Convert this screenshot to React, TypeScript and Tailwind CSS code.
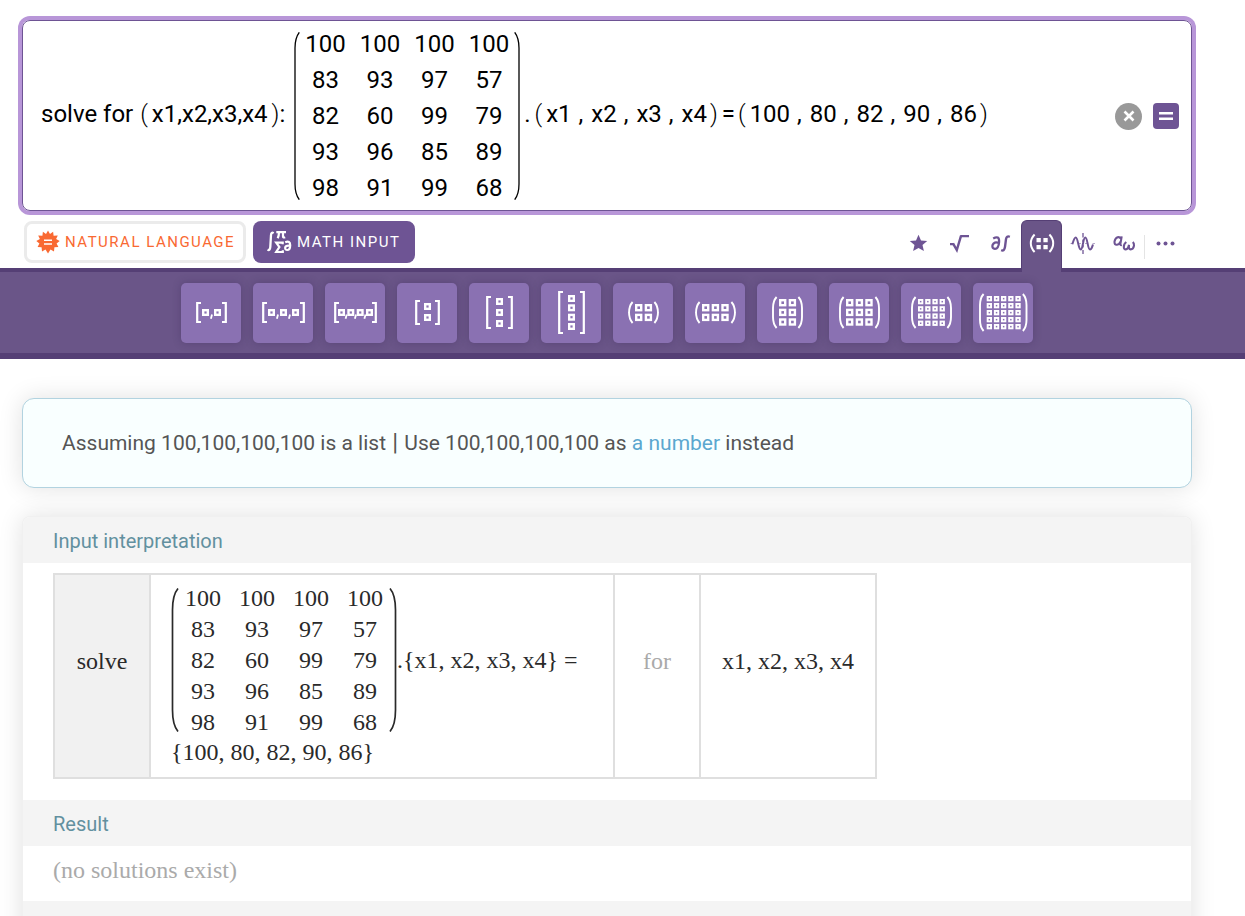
import React, { Fragment } from "react";

const SYSTEM = [
  [100, 100, 100, 100],
  [83, 93, 97, 57],
  [82, 60, 99, 79],
  [93, 96, 85, 89],
  [98, 91, 99, 68],
];

type MatrixIcon = {
  label: string;
  shape: "bracket" | "paren";
  left: number;
  right: number;
  top: number;
  bottom: number;
  size: number;
  xs: number[];
  ys: number[];
  commas?: number[];
};

const MATRIX_ICONS: MatrixIcon[] = [
  { label: "Vector of 2", shape: "bracket", left: 15, right: 46, top: 19, bottom: 40, size: 7, xs: [21, 33], ys: [26], commas: [30.5] },
  { label: "Vector of 3", shape: "bracket", left: 9, right: 52, top: 19, bottom: 40, size: 7, xs: [15, 27, 39], ys: [26], commas: [24.5, 36.5] },
  { label: "Vector of 4", shape: "bracket", left: 9, right: 52, top: 19, bottom: 40, size: 7, xs: [13, 22.3, 31.7, 41], ys: [26], commas: [21.2, 30.5, 40] },
  { label: "Column vector of 2", shape: "bracket", left: 18, right: 43, top: 17, bottom: 42, size: 7, xs: [27], ys: [20, 31] },
  { label: "Column vector of 3", shape: "bracket", left: 17, right: 44, top: 13, bottom: 46, size: 7, xs: [27], ys: [15, 26, 37] },
  { label: "Column vector of 4", shape: "bracket", left: 17, right: 44, top: 8, bottom: 51, size: 7, xs: [27], ys: [12, 21.3, 30.7, 40] },
  { label: "2 by 2 matrix", shape: "paren", left: 15, right: 46, top: 19, bottom: 40, size: 7.4, xs: [22, 31.7], ys: [21, 30.7] },
  { label: "2 by 3 matrix", shape: "paren", left: 10, right: 51, top: 19, bottom: 40, size: 7.4, xs: [17, 26.7, 36.3], ys: [21, 30.7] },
  { label: "3 by 2 matrix", shape: "paren", left: 15, right: 46, top: 14, bottom: 45, size: 7.4, xs: [22, 31.7], ys: [16, 25.7, 35.3] },
  { label: "3 by 3 matrix", shape: "paren", left: 10, right: 51, top: 14, bottom: 45, size: 7.4, xs: [17, 26.7, 36.3], ys: [16, 25.7, 35.3] },
  { label: "4 by 4 matrix", shape: "paren", left: 10, right: 51, top: 14, bottom: 45, size: 5.3, xs: [17, 24.2, 31.4, 38.6], ys: [16, 23.2, 30.4, 37.6] },
  { label: "5 by 5 matrix", shape: "paren", left: 6, right: 54.5, top: 11, bottom: 48, size: 5.3, xs: [13.7, 20.9, 28, 35.2, 42.4], ys: [13, 20, 27, 34, 41] },
];

function MatrixGlyph({ icon }: { icon: MatrixIcon }) {
  const { left: l, right: r, top: t, bottom: b, size, xs, ys } = icon;
  const border = size > 6 ? 2.4 : 1.9;
  const outline =
    icon.shape === "bracket"
      ? `M${l + 5} ${t + 1}H${l + 1.2}V${b - 1}H${l + 5}M${r - 5} ${t + 1}H${r - 1.2}V${b - 1}H${r - 5}`
      : `M${l + 4.6} ${t}Q${l + 1} ${t + 4} ${l + 1} ${t + 11}V${b - 11}Q${l + 1} ${b - 4} ${l + 4.6} ${b}M${r - 4.6} ${t}Q${r - 1} ${t + 4} ${r - 1} ${t + 11}V${b - 11}Q${r - 1} ${b - 4} ${r - 4.6} ${b}`;
  return (
    <svg viewBox="0 0 60 60" className="size-[60px]" fill="none" stroke="white" aria-hidden="true">
      <path d={outline} strokeWidth={icon.shape === "bracket" ? 2.2 : 1.9} />
      {ys.map((y) =>
        xs.map((x) => (
          <rect
            key={`${x}-${y}`}
            x={x + border / 2}
            y={y + border / 2}
            width={size - border}
            height={size - border}
            strokeWidth={border}
          />
        )),
      )}
      {icon.commas?.map((x) => (
        <path key={x} d={`M${x + 0.5} 31.5L${x - 0.6} 35.8`} strokeWidth="1.8" />
      ))}
    </svg>
  );
}

function InputParen({ flip = false }: { flip?: boolean }) {
  return (
    <svg viewBox="0 0 6 168" className="h-[168px] w-[6px]" fill="none" stroke="black" strokeWidth="1.3" aria-hidden="true">
      <path d={flip ? "M.7 .3Q5 6 5 16V152Q5 162 .7 167.7" : "M5.3 .3Q1 6 1 16V152Q1 162 5.3 167.7"} />
    </svg>
  );
}

function SerifParen({ flip = false }: { flip?: boolean }) {
  return (
    <svg viewBox="0 0 8 144" className="h-[144px] w-2" fill="none" stroke="#2a2a2a" strokeWidth="1.7" aria-hidden="true">
      <path d={flip ? "M1 .5Q6.5 7 6.5 22V122Q6.5 137 1 143.5" : "M7 .5Q1.5 7 1.5 22V122Q1.5 137 7 143.5"} />
    </svg>
  );
}

function Tuple({ items }: { items: string[] }) {
  return (
    <>
      <span className="font-light">(</span>
      <span className="pr-[3px] pl-1">
        {items.map((item, i) => (
          <Fragment key={item}>
            {i > 0 && <span className="pr-2 pl-[7px]">,</span>}
            {item}
          </Fragment>
        ))}
      </span>
      <span className="font-light">)</span>
    </>
  );
}

function ModeTabs() {
  return (
    <div className="flex h-[42px] gap-[7px]">
      <button className="flex w-[222px] items-center gap-[5px] rounded-lg border-[3px] border-[#ebebeb] bg-white pl-[9px] text-[15px] tracking-[0.1em] text-[#f96932]">
        <svg viewBox="0 0 24 24" className="size-6 shrink-0" fill="#f96932" aria-hidden="true">
          <path d="M12 0.5L14 4L17.1 1.8L17.6 5.8L21.8 5.5L20.1 9.1L23.7 11L20.6 13.4L22.4 17L18.4 17.3L18 21.4L14.5 19.5L12 23.5L9.5 19.5L6 21.4L5.6 17.3L1.6 17L3.4 13.4L.3 11L3.9 9.1L2.2 5.5L6.4 5.8L6.9 1.8L10 4Z" />
          <path d="M8 10.2H16M8 14H16" stroke="white" strokeWidth="1.6" />
        </svg>
        <span className="whitespace-nowrap">NATURAL LANGUAGE</span>
      </button>
      <button className="flex w-[162px] items-center gap-[5px] rounded-lg bg-[#6e5494] pl-[14px] text-[15px] tracking-[0.1em] text-white">
        <svg viewBox="0 0 25 24" className="h-6 w-[25px] shrink-0" fill="none" stroke="white" aria-hidden="true">
          <path d="M6.6 3.2Q4.3 1.7 4 5L3.3 17Q3 21 .5 19.7" strokeWidth="2.3" />
          <path d="M9.3 2.2H19M12 2.2Q12 5.5 10.7 8.2M16 2.2V6.4Q16 8 18.2 7.3" strokeWidth="2.2" />
          <path d="M15.7 14.2V12.6H9.2L12.4 17L9.2 22H15.8V20.2" strokeWidth="2.2" />
          <path d="M18.2 12.2Q23.2 10.3 23.2 15.2Q23.2 20 20.2 20Q18 20 18.2 17.6Q18.6 15.3 23 15.8" strokeWidth="2.2" />
        </svg>
        <span className="whitespace-nowrap">MATH INPUT</span>
      </button>
    </div>
  );
}

const TOOL_TABS: { label: string; active?: boolean; art: React.ReactNode }[] = [
  {
    label: "Favorites",
    art: <path fill="currentColor" stroke="none" d="M13.5 4.7L16 10.4L22.2 10.9L17.5 15L18.9 21.1L13.5 17.9L8.1 21.1L9.5 15L4.8 10.9L11 10.4Z" />,
  },
  {
    label: "Roots",
    art: (
      <>
        <path strokeWidth="2.1" d="M14.2 6.1H23M4 14.1H7.6" />
        <path strokeWidth="2.4" d="M7 13.4L10.8 20L15 5.8" />
      </>
    ),
  },
  {
    label: "Calculus",
    art: (
      <>
        <path strokeWidth="2.3" d="M6.2 8.4Q12.4 5 12.1 12Q11.6 18.8 8 18.8Q4.9 18.6 5.5 15.2Q7 11 12 13" />
        <path strokeWidth="2.4" d="M22.8 6.8Q19.6 5.4 19 9.2L18 16.8Q17.3 21.6 14.2 20.2" />
      </>
    ),
  },
  {
    label: "Matrices",
    active: true,
    art: (
      <>
        <path strokeWidth="2" d="M6.6 4.5Q2.8 8.5 2.8 13.2Q2.8 18 6.6 22M21.4 4.5Q25.2 8.5 25.2 13.2Q25.2 18 21.4 22" />
        <path fill="currentColor" stroke="none" d="M8.5 8H12.8V12.3H8.5ZM15.4 8H19.7V12.3H15.4ZM8.5 15H12.8V19.3H8.5ZM15.4 15H19.7V19.3H15.4Z" />
      </>
    ),
  },
  {
    label: "Functions",
    art: (
      <>
        <path strokeWidth="2" strokeLinejoin="round" d="M3.3 14.3C4.6 10 5.3 7.5 6.8 7.5C9 7.5 9.3 19.5 11.7 19.5C14 19.5 14 7.5 16.3 7.5C18.6 7.5 18.6 19.5 21 19.5C22.6 19.5 23 17.3 24 14.5" />
        <path strokeWidth="1.3" d="M14 3V7.5M14 9.5V12M14 15V17.5M14 20V24" />
        <path strokeWidth="1" d="M1.5 13.5H4M23.5 13.5H26M9.5 13.5H12M16 13.5H18.5" opacity=".5" />
      </>
    ),
  },
  {
    label: "Greek letters",
    art: (
      <>
        <path strokeWidth="2.1" d="M11.7 6.4L10.4 13.8Q10.2 15.6 11.8 15.1M10.7 8.6Q9.8 6.6 7.6 7.2Q5 8.2 4.5 11.6Q4.3 15 6.8 14.8Q9 14.6 10.5 11.6" />
        <path strokeWidth="2.1" d="M16.3 12Q13.8 13.8 13.8 17Q13.9 19.5 15.8 19.4Q18.2 19.2 19 14.8Q18.4 19.4 20.6 19.4Q23.4 19.2 24 15.6Q24.2 13.4 22.8 12" />
      </>
    ),
  },
];

function ToolTabs() {
  return (
    <nav className="flex items-start text-[#6e5494]" aria-label="Math keyboards">
      {TOOL_TABS.map((tab) => (
        <button
          key={tab.label}
          aria-label={tab.label}
          className={
            tab.active
              ? "relative z-10 flex h-[52px] w-[41px] justify-center rounded-t-md border border-b-0 border-[#553f75] bg-[#6a5588] pt-[9px] text-white"
              : "flex h-12 w-[41px] justify-center pt-[10px]"
          }
        >
          <svg viewBox="0 0 28 28" className="size-7" fill="none" stroke="currentColor" aria-hidden="true">
            {tab.art}
          </svg>
        </button>
      ))}
      <span className="mt-[15px] h-6 w-px bg-[#e4e4e4]" />
      <button aria-label="More" className="flex h-12 w-[41px] justify-center pt-[10px]">
        <svg viewBox="0 0 28 28" className="size-7" fill="currentColor" aria-hidden="true">
          <circle cx="6.5" cy="13.4" r="2" />
          <circle cx="13.5" cy="13.4" r="2" />
          <circle cx="20.5" cy="13.4" r="2" />
        </svg>
      </button>
    </nav>
  );
}

function PodHeading({ children }: { children: React.ReactNode }) {
  return <h2 className="h-[46px] bg-[#f4f4f4] px-[30px] text-xl leading-[48px] text-[#62909f]">{children}</h2>;
}

export default function App() {
  return (
    <div className="flex min-h-screen flex-col bg-white font-['Roboto',sans-serif]">
      <header className="pt-5">
        <div className="mr-[53px] ml-[22px]">
          <form
            onSubmit={(e) => e.preventDefault()}
            className="flex items-center rounded-lg border border-[#6e5494] pt-[5px] pr-3 pb-1 pl-[14px] text-black shadow-[0_0_0_4px_#b896d8]"
          >
            <div
              role="textbox"
              aria-label="Math input"
              tabIndex={0}
              className="flex grow items-center pl-1 text-2xl leading-9 whitespace-nowrap outline-none"
            >
              <span className="pb-1">
                solve for <span className="pl-px font-light">(</span>
                <span className="px-1">x1,x2,x3,x4</span>
                <span className="font-light">)</span>:
              </span>
              <div className="ml-[9px] flex items-center">
                <InputParen />
                <div className="grid grid-cols-4 gap-x-[14px] px-[5px] text-center">
                  {SYSTEM.flat().map((n, i) => (
                    <span key={i}>{n}</span>
                  ))}
                </div>
                <InputParen flip />
              </div>
              <span className="pb-1 pl-1">
                <span className="pr-1">.</span>
                <Tuple items={["x1", "x2", "x3", "x4"]} />
                <span className="pr-[3px] pl-1">=</span>
                <Tuple items={["100", "80", "82", "90", "86"]} />
              </span>
            </div>
            <div className="flex items-center gap-[11px]">
              <button type="button" aria-label="Clear" className="flex size-[27px] items-center justify-center rounded-full bg-[#999]">
                <svg viewBox="0 0 12 12" className="size-3" stroke="white" strokeWidth="2.6" aria-hidden="true">
                  <path d="M1.5 1.5L10.5 10.5M10.5 1.5L1.5 10.5" />
                </svg>
              </button>
              <button type="submit" aria-label="Compute" className="flex size-[26px] items-center justify-center rounded bg-[#6e5494]">
                <svg viewBox="0 0 14 10" className="h-[10px] w-[14px]" stroke="white" strokeWidth="2.6" aria-hidden="true">
                  <path d="M0 2.2H14M0 7.8H14" />
                </svg>
              </button>
            </div>
          </form>
          <div className="mt-[9px] flex h-12 items-start justify-between pr-[6px] pl-[2px]">
            <div className="pt-px">
              <ModeTabs />
            </div>
            <ToolTabs />
          </div>
        </div>
        <div className="border-t-4 border-b-[6px] border-[#553f75] bg-[#6a5588] pt-[11px] pr-8 pb-[10px]">
          <div className="flex justify-center gap-3">
            {MATRIX_ICONS.map((icon) => (
              <button
                key={icon.label}
                aria-label={icon.label}
                className="size-[60px] rounded-[5px] bg-[#8a71b2] shadow-[0_0_8px_rgba(50,30,80,0.3)]"
              >
                <MatrixGlyph icon={icon} />
              </button>
            ))}
          </div>
        </div>
      </header>

      <main className="mr-[53px] ml-[22px] flex grow flex-col pt-[39px]">
        <p className="rounded-xl border border-[#b2d3e0] bg-[#f9ffff] px-[39px] py-[27px] text-[21px] leading-[33px] text-[#555] shadow-[0_0_24px_rgba(0,0,0,0.12)]">
          Assuming 100,100,100,100 is a list <span className="px-px text-2xl leading-[33px]">|</span> Use 100,100,100,100 as{" "}
          <a href="#number" className="text-[#5ba7cf]">
            a number
          </a>{" "}
          instead
        </p>

        <div className="mt-7 grow overflow-hidden rounded-t-lg border border-b-0 border-[#f0f0f0] bg-white shadow-[0_0_24px_rgba(0,0,0,0.12)]">
          <section>
            <PodHeading>Input interpretation</PodHeading>
            <div className="px-[30px] pt-[10px] pb-[21px] font-['Liberation_Serif',serif] text-2xl text-[#2a2a2a]">
              <table className="border-collapse border-2 border-[#dfdfdf]">
                <tbody>
                  <tr className="h-[204px]">
                    <td className="w-[96px] border-2 border-[#dfdfdf] bg-[#f1f1f1] pb-[30px] text-center">solve</td>
                    <td className="w-[464px] border-2 border-[#dfdfdf] pb-1 pl-5">
                      <div className="flex items-center whitespace-nowrap">
                        <SerifParen />
                        <div className="grid grid-cols-4 gap-x-[18px] px-[6px] text-center leading-[31px]">
                          {SYSTEM.flat().map((n, i) => (
                            <span key={i}>{n}</span>
                          ))}
                        </div>
                        <SerifParen flip />
                        <span>.&#123;x1, x2, x3, x4&#125; =</span>
                      </div>
                      <div className="leading-7">&#123;100, 80, 82, 90, 86&#125;</div>
                    </td>
                    <td className="w-[86px] border-2 border-[#dfdfdf] pb-[30px] text-center text-[#aaa]">for</td>
                    <td className="w-[176px] border-2 border-[#dfdfdf] pb-[30px] text-center">x1, x2, x3, x4</td>
                  </tr>
                </tbody>
              </table>
            </div>
          </section>
          <section>
            <PodHeading>Result</PodHeading>
            <p className="h-[55px] px-[30px] font-['Liberation_Serif',serif] text-2xl leading-[49px] text-[#aaa]">
              (no solutions exist)
            </p>
          </section>
          <div className="h-[46px] bg-[#f4f4f4]" />
        </div>
      </main>
    </div>
  );
}
